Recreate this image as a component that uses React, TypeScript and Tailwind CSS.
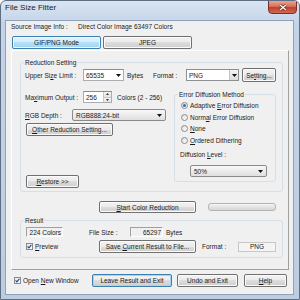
import React from "react";

// shared control styles
const btn =
  "flex items-center justify-center whitespace-pre rounded-[2px] border border-[#707070] bg-[linear-gradient(#f2f2f2,#ebebeb_50%,#dddddd_50%,#cfcfcf)] shadow-[inset_0_0_0_1px_#fbfbfb]";
const btnBlue =
  "flex items-center justify-center whitespace-pre rounded-[2px] border border-[#3c7fb1] bg-[linear-gradient(#e5f4fc,#d2ecfb_50%,#b6e0f8_50%,#9fd3f2)] shadow-[inset_0_0_0_1px_#f0f9ff]";
const btnDefault =
  "flex items-center justify-center whitespace-pre rounded-[2px] border border-[#3c7fb1] bg-[linear-gradient(#f2f2f2,#ebebeb_50%,#dddddd_50%,#cfcfcf)] shadow-[inset_0_0_0_1px_#9fd8f6]";
const sunken =
  "flex items-center border border-t-[#a0a0a0] border-l-[#a0a0a0] border-r-white border-b-white";
const group = "relative rounded-[3px] border border-[#d5dfe5]";
const groupLabel = "absolute left-[3px] -top-[5px] px-[1px] bg-[#f0f0f0] whitespace-nowrap";

function Arrow() {
  return (
    <svg width="5" height="3" viewBox="0 0 5 3" className="shrink-0">
      <path d="M0 0h5L2.5 3z" fill="#111" />
    </svg>
  );
}

function Check() {
  return (
    <div className="w-[7px] h-[7px] shrink-0 border border-[#8a8a8a] bg-[linear-gradient(135deg,#e6e6e6,#ffffff)] flex items-center justify-center">
      <svg width="5" height="5" viewBox="0 0 5 5">
        <path d="M0.6 2.4L1.9 3.8L4.4 0.8" stroke="#21418f" strokeWidth="1.1" fill="none" />
      </svg>
    </div>
  );
}

function Radio({ on }: { on?: boolean }) {
  return (
    <div className="w-[7px] h-[7px] shrink-0 rounded-full border border-[#8c8c8c] bg-[linear-gradient(135deg,#dcdcdc,#ffffff)] flex items-center justify-center">
      {on && <div className="w-[3px] h-[3px] rounded-full bg-[#2f6db5]" />}
    </div>
  );
}

export default function App() {
  return (
    <div className="w-[300px] h-[300px] overflow-hidden rounded-t-[6px] border border-[#5f6f83] bg-[linear-gradient(#dae5f2,#c4d4e8_22px,#bccde2)] font-['Liberation_Sans',Arial,sans-serif] text-[6.5px] leading-[9px] text-[#1a1a1a] flex flex-col">
      {/* title bar */}
      <div className="h-[19px] shrink-0 flex items-start">
        <span className="ml-[4px] mt-[2px] text-[8px] leading-[10px] text-[#1b1b1b]">File Size Fitter</span>
        <div className="ml-auto mr-[2px] -mt-px w-[29px] h-[14px] rounded-b-[4px] border border-[#7a2e24] bg-[linear-gradient(#e7a595,#d7705d_45%,#c1402a_55%,#d06a52)] flex items-center justify-center">
          <svg width="8" height="7" viewBox="0 0 8 7">
            <path d="M1 1L7 6M7 1L1 6" stroke="#5a1a12" strokeWidth="2.6" />
            <path d="M1 1L7 6M7 1L1 6" stroke="#ffffff" strokeWidth="1.4" />
          </svg>
        </div>
      </div>

      {/* client area */}
      <div className="ml-[4px] w-[289px] h-[275px] shrink-0 border border-[#8fa2b8] bg-[#f0f0f0] flex flex-col">
        <div className="mt-[1px] h-[9px] pl-[5px] flex">
          <span className="w-[67px]">Source Image Info :</span>
          <span>Direct Color Image 63497 Colors</span>
        </div>

        <div className="mt-[5px] pl-[6px] flex gap-[2px]">
          <div className={btnBlue + " w-[89px] h-[13px]"}>GIF/PNG Mode</div>
          <div className={btn + " w-[89px] h-[13px]"}>JPEG</div>
        </div>

        {/* mode panel */}
        <div className="mt-[1px] ml-[5px] w-[278px] h-[220px] border border-t-white border-l-white border-r-[#a0a0a0] border-b-[#a0a0a0] flex flex-col">
          {/* Reduction Setting */}
          <div className={group + " ml-[8px] mt-[11px] w-[263px] h-[130px] flex flex-col"}>
            <span className={groupLabel}>Reduction Setting</span>

            <div className="mt-[5px] h-[14px] flex items-center">
              <span className="ml-[4px] w-[58px]">
                Upper Si<u>z</u>e Limit :
              </span>
              <div className="w-[41px] h-[12px] bg-white border border-[#abadb3] border-t-[#8a8d93] flex items-center pl-[2px] pr-[2px]">
                <span>65535</span>
                <span className="ml-auto"><Arrow /></span>
              </div>
              <span className="ml-[3px] w-[26px]">Bytes</span>
              <span className="w-[33px]">Format :</span>
              <div className="w-[53px] h-[12px] bg-white border border-[#8e8f8f] flex items-center">
                <span className="pl-[2px]">PNG</span>
                <div className="ml-auto h-full w-[9px] border-l border-[#c4c4c4] bg-[linear-gradient(#f4f4f4,#dedede)] flex items-center justify-center">
                  <Arrow />
                </div>
              </div>
              <div className={btn + " ml-[3px] w-[34px] h-[14px]"}>
                Se<u>t</u>ting...
              </div>
            </div>

            <div className="mt-[9px] flex">
              <div className="w-[153px] flex flex-col">
                <div className="h-[12px] flex items-center">
                  <span className="ml-[4px] w-[58px]">
                    Ma<u>x</u>imum Output :
                  </span>
                  <div className="w-[29px] h-[12px] bg-white border border-[#abadb3] border-t-[#8a8d93] flex items-center pl-[2px]">
                    <span>256</span>
                    <div className="ml-auto h-full w-[8px] flex flex-col border-l border-[#c9c9c9]">
                      <div className="flex-1 bg-[linear-gradient(#f5f5f5,#e4e4e4)] border-b border-[#c9c9c9] flex items-center justify-center">
                        <svg width="3" height="2" viewBox="0 0 3 2"><path d="M0 2h3L1.5 0z" fill="#333" /></svg>
                      </div>
                      <div className="flex-1 bg-[linear-gradient(#f5f5f5,#e4e4e4)] flex items-center justify-center">
                        <svg width="3" height="2" viewBox="0 0 3 2"><path d="M0 0h3L1.5 2z" fill="#333" /></svg>
                      </div>
                    </div>
                  </div>
                  <span className="ml-[5px] whitespace-nowrap">Colors (2 - 256)</span>
                </div>

                <div className="mt-[6px] h-[12px] flex items-center">
                  <span className="ml-[4px] w-[47px]">
                    <u>R</u>GB Depth :
                  </span>
                  <div className="w-[94px] h-[12px] rounded-[2px] border border-[#8a8a8a] bg-[linear-gradient(#f7f7f7,#ececec_50%,#dfdfdf)] flex items-center pl-[3px] pr-[3px]">
                    <span>RGB888:24-bit</span>
                    <span className="ml-auto"><Arrow /></span>
                  </div>
                </div>

                <div className={btn + " mt-[2px] ml-[5px] w-[87px] h-[13px]"}>
                  <u>O</u>ther Reduction Setting...
                </div>

                <div className={btn + " mt-[39px] ml-[5px] w-[53px] h-[13px]"}>
                  <u>R</u>estore &gt;&gt;
                </div>
              </div>

              {/* Error Diffusion Method */}
              <div className={group + " mt-[3px] w-[102px] h-[88px] flex flex-col"}>
                <span className={groupLabel}>Error Diffusion Method</span>
                <div className="mt-[5px] ml-[6px] flex flex-col">
                  <div className="h-[11.5px] flex items-center gap-[2px]">
                    <Radio on />
                    <span>Adaptive <u>E</u>rror Diffusion</span>
                  </div>
                  <div className="h-[11.5px] flex items-center gap-[2px]">
                    <Radio />
                    <span>Norm<u>a</u>l Error Diffusion</span>
                  </div>
                  <div className="h-[11.5px] flex items-center gap-[2px]">
                    <Radio />
                    <span><u>N</u>one</span>
                  </div>
                  <div className="h-[11.5px] flex items-center gap-[2px]">
                    <Radio />
                    <span><u>O</u>rdered Dithering</span>
                  </div>
                </div>
                <span className="mt-[4px] ml-[5px] h-[9px]">
                  Diffusion <u>L</u>evel :
                </span>
                <div className="mt-[6px] ml-[15px] w-[77px] h-[12px] rounded-[2px] border border-[#8a8a8a] bg-[linear-gradient(#f7f7f7,#ececec_50%,#dfdfdf)] flex items-center pl-[3px] pr-[3px]">
                  <span>50%</span>
                  <span className="ml-auto"><Arrow /></span>
                </div>
              </div>
            </div>
          </div>

          {/* start row */}
          <div className="mt-[9px] h-[12px] flex items-center">
            <div className={btn + " ml-[87px] w-[97px] h-[12px]"}>
              <u>S</u>{"tart Color Reduction"}
            </div>
            <div className="ml-[12px] w-[68px] h-[8px] rounded-[3px] border border-[#b4b4b4] bg-[linear-gradient(#f5f5f5,#e4e4e4_50%,#d6d6d6)]" />
          </div>

          {/* Result */}
          <div className={group + " mt-[7px] ml-[8px] w-[263px] h-[38px] flex flex-col"}>
            <span className={groupLabel}>Result</span>
            <div className="mt-[6px] h-[10px] flex items-center">
              <div className={sunken + " ml-[5px] w-[37px] h-[10px] justify-end pr-[1px]"}>224 Colors</div>
              <span className="ml-[26px] w-[41px]">File Size :</span>
              <div className={sunken + " w-[33px] h-[10px] justify-end pr-[1px]"}>65297</div>
              <span className="ml-[3px]">Bytes</span>
            </div>
            <div className="mt-[3px] h-[13px] flex items-center">
              <div className="w-[78px] pl-[5px] flex items-center gap-[2px]">
                <Check />
                <span><u>P</u>review</span>
              </div>
              <div className={btn + " w-[97px] h-[13px]"}>
                {"Save "}
                <u>C</u>
                {"urrent Result to File..."}
              </div>
              <span className="ml-[6px] w-[36px]">Format :</span>
              <div className="w-[38px] h-[10px] border border-[#c8c8c8] bg-[#f4f4f4] flex items-center justify-center">PNG</div>
            </div>
          </div>
        </div>

        {/* bottom buttons */}
        <div className="mt-[4px] h-[13px] flex items-center">
          <div className="w-[86px] pl-[8px] flex items-center gap-[2px]">
            <Check />
            <span className="whitespace-pre">
              {"Open "}
              <u>N</u>
              {"ew Window"}
            </span>
          </div>
          <div className={btnDefault + " w-[80px] h-[13px]"}>Leave Result and Exit</div>
          <div className={btn + " ml-[5px] w-[61px] h-[13px]"}>Undo and Exit</div>
          <div className={btn + " ml-[6px] w-[43px] h-[13px]"}>
            <u>H</u>elp
          </div>
        </div>
      </div>
    </div>
  );
}
